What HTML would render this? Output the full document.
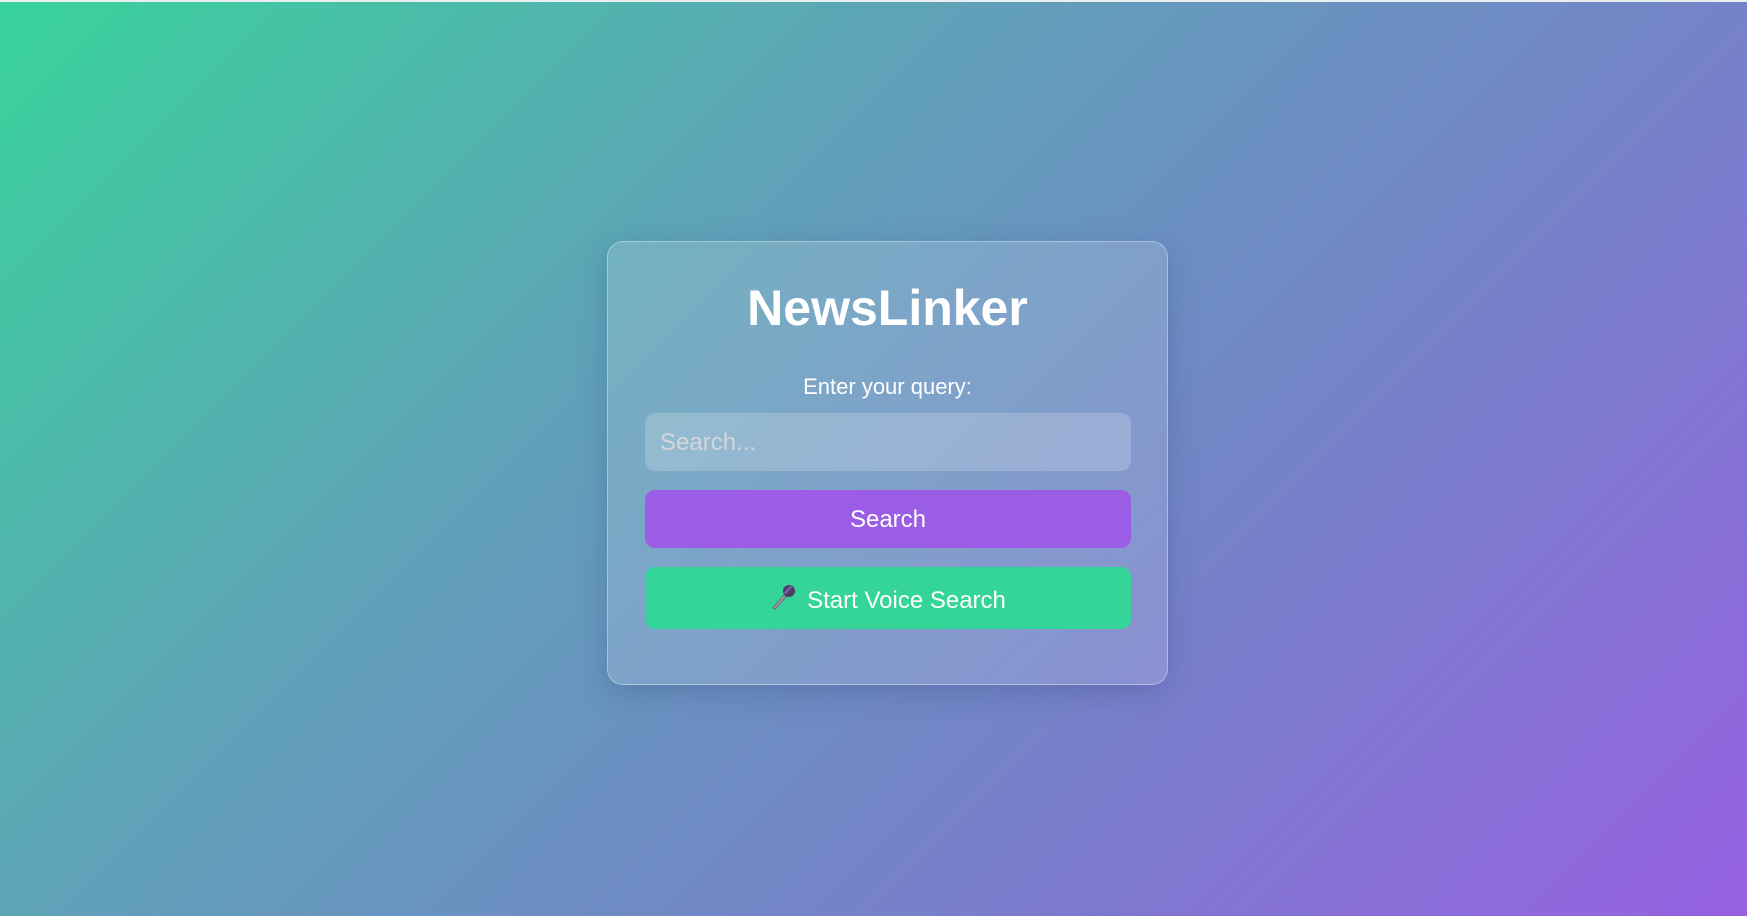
<!DOCTYPE html>
<html><head><meta charset="utf-8"><style>
html,body{margin:0;padding:0;width:1747px;height:916px;overflow:hidden}
body{background:linear-gradient(135deg,#38d39b 0%,#5fa3b8 35%,#7483c8 65%,#9761e2 100%);font-family:"Liberation Sans",Arial,sans-serif;position:relative}
.top{position:absolute;left:0;top:0;width:100%;height:2px;background:#e8efee}
.card{position:absolute;left:607px;top:241px;width:559px;height:442px;border:1px solid rgba(255,255,255,0.35);border-radius:16px;background:rgba(255,255,255,0.14);box-shadow:0 8px 30px rgba(40,60,110,0.25)}
h1{position:absolute;left:607px;width:561px;top:283px;margin:0;text-align:center;color:#fff;font-size:50px;font-weight:bold;line-height:1}
.lbl{position:absolute;left:607px;width:561px;top:375px;text-align:center;color:#fff;font-size:22px;line-height:24px}
.in{position:absolute;left:645px;top:413px;width:486px;height:58px;border-radius:10px;background:rgba(255,255,255,0.2);box-sizing:border-box;padding-left:15px;color:rgba(215,215,220,0.95);font-size:24px;line-height:60px}
.btn{position:absolute;left:645px;width:486px;border-radius:10px;color:#fff;font-size:24px;text-align:center}
.b1{top:490px;height:58px;line-height:60px;background:#9b5de5}
.b2{top:567px;height:62px;line-height:68px;background:#35d499}
svg{vertical-align:middle;margin-right:11px;position:relative;top:-5px}
</style></head><body>
<div class="top"></div>
<div class="card"></div>
<h1>NewsLinker</h1>
<div class="lbl">Enter your query:</div>
<div class="in">Search...</div>
<div class="btn b1">Search</div>
<div class="btn b2"><svg width="26" height="26" viewBox="0 0 26 26"><path d="M3 24 L14 11 L16 13 L5 25 Z" fill="#a7a0b0" stroke="#6f6a78" stroke-width="1"/><circle cx="19" cy="7" r="6" fill="#4a4060"/><path d="M14.5 9.5 L21.5 2.5" stroke="#7a5ab0" stroke-width="2.5"/></svg>Start Voice Search</div>
</body></html>
